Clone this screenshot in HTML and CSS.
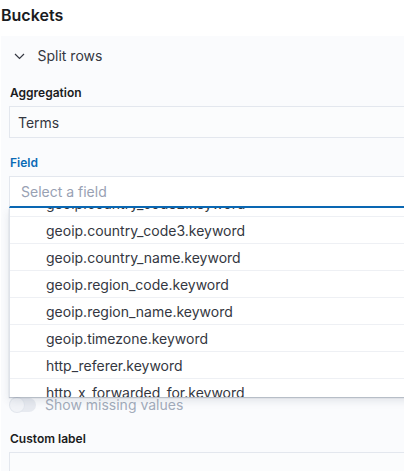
FILE: index.html
```html
<!DOCTYPE html>
<html>
<head>
<meta charset="utf-8">
<link rel="stylesheet" href="styles.css">
</head>
<body>
<h2 class="title">Buckets</h2>
<div class="panel">
  <div class="accordion-head">
    <svg class="chevron" width="16" height="16" viewBox="0 0 16 16"><path d="M2 6 L6.5 10.5 L11 6" fill="none" stroke="#343741" stroke-width="1.2"/></svg>
    <span class="head-text">Split rows</span>
  </div>
  <div class="form-label first">Aggregation</div>
  <div class="control filled">Terms</div>
  <div class="form-label blue">Field</div>
  <div class="combo">
    <div class="control combo-input"><span class="placeholder">Select a field</span></div>
    <div class="dropdown">
      <ul class="options">
        <li>geoip.country_code2.keyword</li>
        <li>geoip.country_code3.keyword</li>
        <li>geoip.country_name.keyword</li>
        <li>geoip.region_code.keyword</li>
        <li>geoip.region_name.keyword</li>
        <li>geoip.timezone.keyword</li>
        <li>http_referer.keyword</li>
        <li>http_x_forwarded_for.keyword</li>
      </ul>
    </div>
  </div>
  <div class="covered"></div>
  <div class="switch-row">
    <span class="switch"><span class="knob"></span></span>
    <span class="switch-label">Show missing values</span>
  </div>
  <div class="form-label custom">Custom label</div>
  <div class="control filled"></div>
</div>
</body>
</html>
```

FILE: styles.css
```css
html, body {
  margin: 0;
  padding: 0;
}
body {
  width: 404px;
  height: 471px;
  overflow: hidden;
  background: #ffffff;
  font-family: Inter, "Noto Sans", sans-serif;
  color: #343741;
}
.title {
  margin: 0;
  padding: 3px 0 0 1px;
  font-size: 16px;
  line-height: 24px;
  font-weight: 600;
  color: #1a1c21;
}
.panel {
  margin: 9px 0 0 1px;
  width: 640px;
  padding: 10px 0 40px 8px;
  background: #fafbfd;
}
.accordion-head {
  display: flex;
  align-items: center;
  height: 20px;
}
.chevron {
  margin-left: 4px;
  display: block;
}
.head-text {
  margin-left: 8.5px;
  font-size: 14px;
  line-height: 20px;
}
.form-label {
  font-size: 12px;
  line-height: 18px;
  font-weight: 600;
  color: #1a1c21;
  margin: 16px 0 4px 1px;
}
.form-label.first {
  margin-top: 18px;
}
.form-label.blue {
  color: #0a6ab5;
}
.form-label.custom {
  margin-top: 15px;
}
.control {
  box-sizing: border-box;
  height: 32px;
  border: 1px solid #e3e7ee;
  background: #fbfcfd;
  padding: 1px 8px 0 8px;
  font-size: 14px;
  line-height: 30px;
  color: #343741;
}
.combo {
  position: relative;
}
.combo-input {
  background: #ffffff;
  border-bottom: 2px solid #0a68b4;
  padding-top: 0;
  line-height: 29px;
  padding-left: 11px;
}
.placeholder {
  color: #98a1b3;
}
.dropdown {
  position: absolute;
  left: 0;
  top: 100%;
  width: 640px;
  height: 189px;
  overflow: hidden;
  box-sizing: border-box;
  background: #ffffff;
  border-left: 1px solid #dfe3ea;
  box-shadow: 0 1px 1px rgba(60, 75, 100, 0.28), 0 4px 8px rgba(60, 75, 100, 0.12);
  z-index: 2;
}
.options {
  list-style: none;
  margin: -19px 0 0 0;
  padding: 0;
}
.options li {
  box-sizing: border-box;
  height: 27px;
  border-top: 1px solid #eef0f4;
  padding-left: 36px;
  font-size: 14px;
  line-height: 28px;
  color: #343741;
  white-space: nowrap;
}
.covered {
  height: 187px;
}
.switch-row {
  display: flex;
  align-items: center;
  height: 20px;
  margin-left: 1px;
}
.switch {
  position: relative;
  width: 26px;
  height: 14px;
  border-radius: 7px;
  background: #e7eaf0;
  flex: none;
}
.knob {
  position: absolute;
  left: 0;
  top: 0;
  width: 14px;
  height: 14px;
  border-radius: 50%;
  background: #f1f3f7;
  box-shadow: 0 0 0 1px #e2e6ed;
}
.switch-label {
  margin-left: 9px;
  font-size: 14px;
  line-height: 20px;
  color: #a3acbb;
}
```
